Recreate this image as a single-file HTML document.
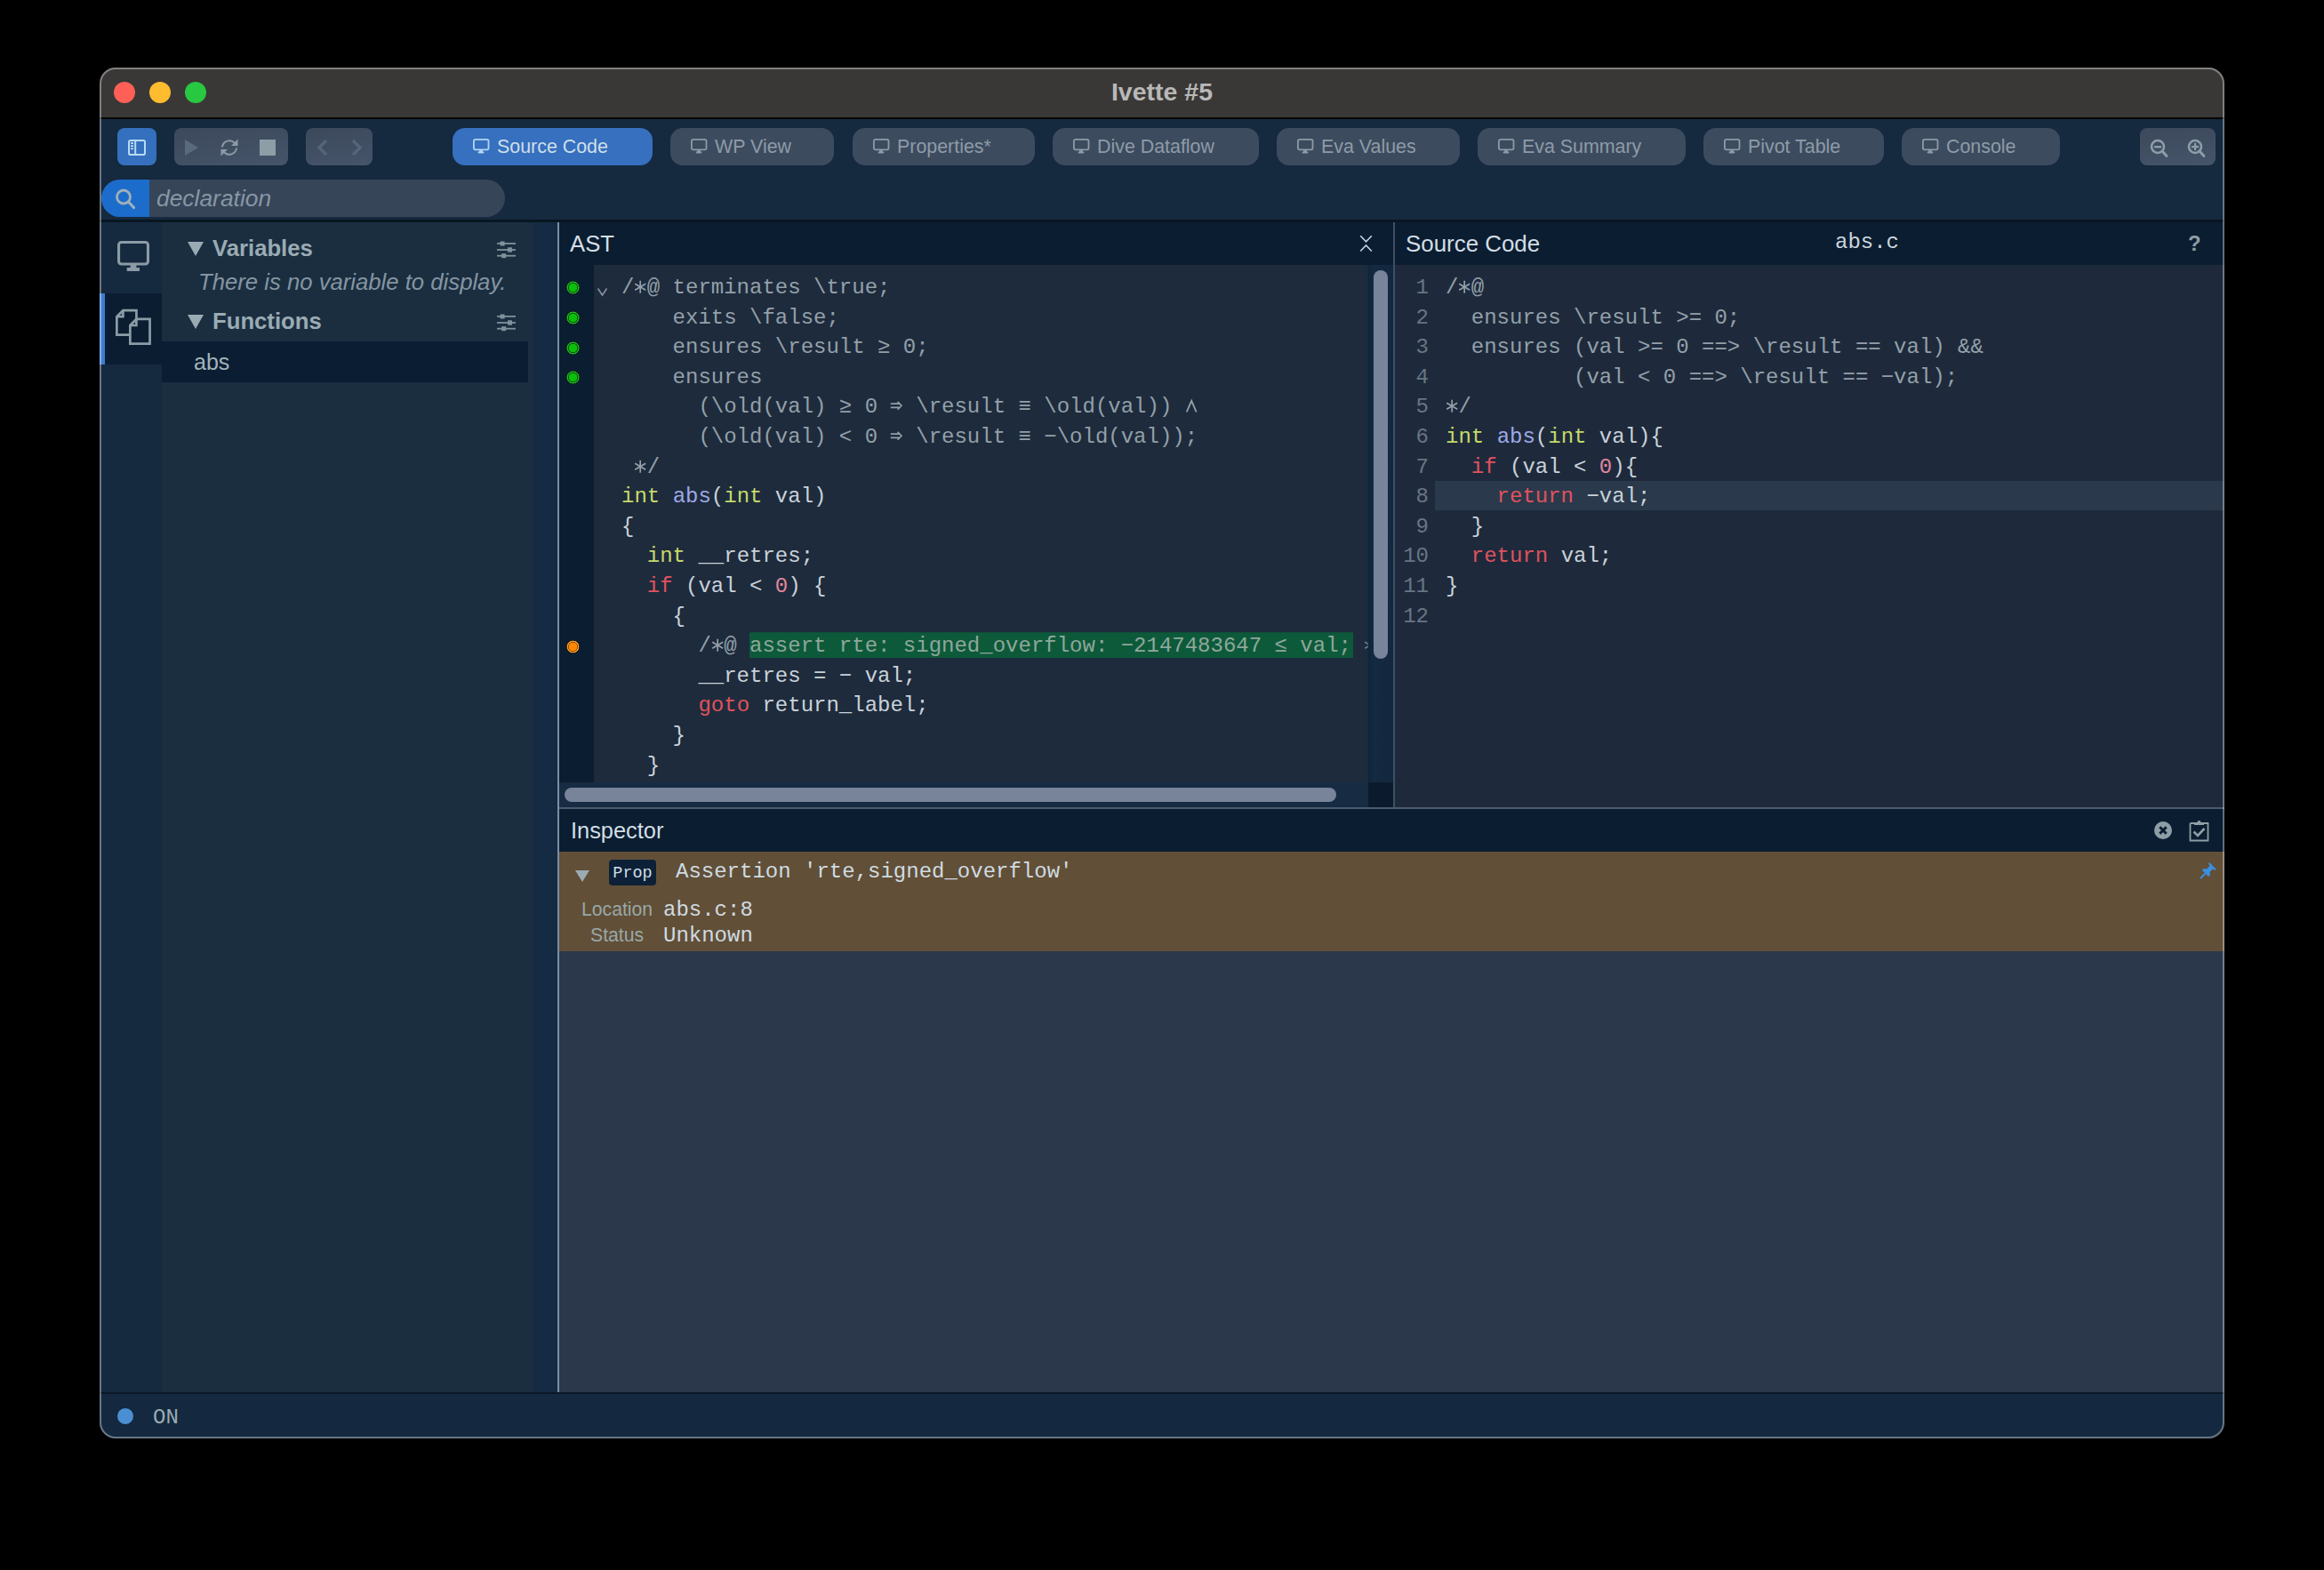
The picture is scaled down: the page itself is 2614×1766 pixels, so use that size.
<!DOCTYPE html>
<html><head><meta charset="utf-8">
<style>
*{margin:0;padding:0;box-sizing:border-box}
html,body{width:2614px;height:1766px;background:#000;overflow:hidden}
body{position:relative;font-family:"Liberation Sans",sans-serif}
.a{position:absolute}
#win{position:absolute;left:112px;top:76px;width:2390px;height:1542px;border-radius:18px;overflow:hidden;background:#152a41}
#in{position:absolute;left:-112px;top:-76px;width:2614px;height:1766px}
#frame{position:absolute;left:112px;top:76px;width:2390px;height:1542px;border-radius:18px;border:2px solid rgba(255,255,255,0.36);pointer-events:none;z-index:50}
.mono{font-family:"Liberation Mono",monospace}
.tab{position:absolute;top:144px;height:42px;border-radius:14px;background:#3d4b5f;color:#8d9ba7;font-size:21.4px;line-height:42px;white-space:nowrap}
.tab.on{background:#3670bf;color:#cfdfe9}
.tab.on svg{color:#b4d6f2}
.tab svg{position:absolute;left:23px;top:12px}
.tab span{position:absolute;left:50px;top:0}
.grp{position:absolute;top:144px;height:42px;border-radius:8px;background:linear-gradient(170deg,#3c495b,#46546a)}
.code{position:absolute;font-family:"Liberation Mono",monospace;font-size:24px;line-height:33.6px;white-space:pre;color:#c9d2da}
.cm{color:#93a0aa}
.kw{color:#c6da6a}
.fn{color:#9ea8e6}
.rd{color:#e0525e}
.nm{color:#e3879e}
.ln{color:#687584}
.hl{background:#0d5a3b;color:#8ea79a;box-shadow:0 -1.5px 0 #0d5a3b, 2px -1.5px 0 #0d5a3b, 2px 0 0 #0d5a3b}
.g{display:inline-block;width:14.4px;height:20px;vertical-align:-2px}
.g svg{display:block}
.dot{width:15px;height:15px;border-radius:50%;background:radial-gradient(circle closest-side,#0bbf0b 0,#0bbf0b 62%,#0a5c0a 66%,#0a5c0a 74%,#28b028 79%,#28b028 90%,#06300a 96%)}
.dot.or{background:radial-gradient(circle closest-side,#ff8800 0,#ff8800 60%,#9a4c00 65%,#9a4c00 72%,#f3a13a 77%,#f3a13a 88%,#2a1800 95%)}
</style></head><body>
<div id="win"><div id="in">
  <!-- title bar -->
  <div class="a" style="left:112px;top:76px;width:2390px;height:56px;background:#3a3836"></div>
  <div class="a" style="left:112px;top:132px;width:2390px;height:1.6px;background:#050505"></div>
  <div class="a" style="left:128px;top:92px;width:24px;height:24px;border-radius:50%;background:#fe5f57"></div>
  <div class="a" style="left:168px;top:92px;width:24px;height:24px;border-radius:50%;background:#febc2e"></div>
  <div class="a" style="left:208px;top:92px;width:24px;height:24px;border-radius:50%;background:#28c840"></div>
  <div class="a" style="left:112px;top:75px;width:2390px;height:56px;line-height:56px;text-align:center;color:#b8b8b8;font-weight:bold;font-size:28.5px">Ivette #5</div>
  <!-- toolbar -->
  <div class="a" style="left:112px;top:134px;width:2390px;height:114px;background:#15293f"></div>
  <!-- sidebar toggle -->
  <div class="grp" style="left:132px;width:44px;background:#3570bf">
    <svg class="a" style="left:12px;top:13px" width="20" height="18" viewBox="0 0 20 18"><rect x="1" y="1" width="18" height="16" rx="1.8" fill="none" stroke="#b8daf0" stroke-width="2"/><rect x="7.2" y="1" width="2" height="16" fill="#b8daf0"/><rect x="3" y="3.2" width="3" height="1.7" fill="#c2e0f2"/><rect x="3" y="6.3" width="3" height="1.7" fill="#c2e0f2"/><rect x="3" y="9.4" width="3" height="1.7" fill="#c2e0f2"/></svg>
  </div>
  <div class="grp" style="left:196px;width:128px">
    <svg class="a" style="left:12px;top:13px" width="16" height="18" viewBox="0 0 16 18"><path d="M0 0 L15 9 L0 18 Z" fill="#5a6a7e"/></svg>
    <svg class="a" style="left:51px;top:11px" width="22" height="22" viewBox="0 0 22 22"><path d="M3 10.5 A8 8 0 0 1 17 6" fill="none" stroke="#8c9ca6" stroke-width="2"/><path d="M19 11.5 A8 8 0 0 1 5 16" fill="none" stroke="#8c9ca6" stroke-width="2"/><path d="M20.5 1.5 L20.5 9 L13 9 Z" fill="#8c9ca6"/><path d="M1.5 20.5 L1.5 13 L9 13 Z" fill="#8c9ca6"/></svg>
    <div class="a" style="left:96px;top:13px;width:17.5px;height:18px;background:#8d9ea7"></div>
  </div>
  <div class="grp" style="left:344px;width:75px">
    <svg class="a" style="left:12px;top:12px" width="14" height="20" viewBox="0 0 14 20"><path d="M11 2 L3 10 L11 18" fill="none" stroke="#56667a" stroke-width="3.2"/></svg>
    <svg class="a" style="left:50px;top:12px" width="14" height="20" viewBox="0 0 14 20"><path d="M3 2 L11 10 L3 18" fill="none" stroke="#56667a" stroke-width="3.2"/></svg>
  </div>
  <div class="tab on" style="left:509px;width:225px"><svg width="19" height="17" viewBox="0 0 19 17"><rect x="0.9" y="0.9" width="16.6" height="11.4" rx="1.8" fill="none" stroke="currentColor" stroke-width="1.8"/><path d="M7.4 12.5 L10.6 12.5 L11 15.2 L7 15.2 Z" fill="currentColor"/><rect x="5.6" y="14.6" width="6.8" height="1.8" rx="0.8" fill="currentColor"/></svg><span>Source Code</span></div>
  <div class="tab" style="left:754px;width:184px"><svg width="19" height="17" viewBox="0 0 19 17"><rect x="0.9" y="0.9" width="16.6" height="11.4" rx="1.8" fill="none" stroke="currentColor" stroke-width="1.8"/><path d="M7.4 12.5 L10.6 12.5 L11 15.2 L7 15.2 Z" fill="currentColor"/><rect x="5.6" y="14.6" width="6.8" height="1.8" rx="0.8" fill="currentColor"/></svg><span>WP View</span></div>
  <div class="tab" style="left:959px;width:205px"><svg width="19" height="17" viewBox="0 0 19 17"><rect x="0.9" y="0.9" width="16.6" height="11.4" rx="1.8" fill="none" stroke="currentColor" stroke-width="1.8"/><path d="M7.4 12.5 L10.6 12.5 L11 15.2 L7 15.2 Z" fill="currentColor"/><rect x="5.6" y="14.6" width="6.8" height="1.8" rx="0.8" fill="currentColor"/></svg><span>Properties*</span></div>
  <div class="tab" style="left:1184px;width:232px"><svg width="19" height="17" viewBox="0 0 19 17"><rect x="0.9" y="0.9" width="16.6" height="11.4" rx="1.8" fill="none" stroke="currentColor" stroke-width="1.8"/><path d="M7.4 12.5 L10.6 12.5 L11 15.2 L7 15.2 Z" fill="currentColor"/><rect x="5.6" y="14.6" width="6.8" height="1.8" rx="0.8" fill="currentColor"/></svg><span>Dive Dataflow</span></div>
  <div class="tab" style="left:1436px;width:206px"><svg width="19" height="17" viewBox="0 0 19 17"><rect x="0.9" y="0.9" width="16.6" height="11.4" rx="1.8" fill="none" stroke="currentColor" stroke-width="1.8"/><path d="M7.4 12.5 L10.6 12.5 L11 15.2 L7 15.2 Z" fill="currentColor"/><rect x="5.6" y="14.6" width="6.8" height="1.8" rx="0.8" fill="currentColor"/></svg><span>Eva Values</span></div>
  <div class="tab" style="left:1662px;width:234px"><svg width="19" height="17" viewBox="0 0 19 17"><rect x="0.9" y="0.9" width="16.6" height="11.4" rx="1.8" fill="none" stroke="currentColor" stroke-width="1.8"/><path d="M7.4 12.5 L10.6 12.5 L11 15.2 L7 15.2 Z" fill="currentColor"/><rect x="5.6" y="14.6" width="6.8" height="1.8" rx="0.8" fill="currentColor"/></svg><span>Eva Summary</span></div>
  <div class="tab" style="left:1916px;width:203px"><svg width="19" height="17" viewBox="0 0 19 17"><rect x="0.9" y="0.9" width="16.6" height="11.4" rx="1.8" fill="none" stroke="currentColor" stroke-width="1.8"/><path d="M7.4 12.5 L10.6 12.5 L11 15.2 L7 15.2 Z" fill="currentColor"/><rect x="5.6" y="14.6" width="6.8" height="1.8" rx="0.8" fill="currentColor"/></svg><span>Pivot Table</span></div>
  <div class="tab" style="left:2139px;width:178px"><svg width="19" height="17" viewBox="0 0 19 17"><rect x="0.9" y="0.9" width="16.6" height="11.4" rx="1.8" fill="none" stroke="currentColor" stroke-width="1.8"/><path d="M7.4 12.5 L10.6 12.5 L11 15.2 L7 15.2 Z" fill="currentColor"/><rect x="5.6" y="14.6" width="6.8" height="1.8" rx="0.8" fill="currentColor"/></svg><span>Console</span></div>
  <div class="grp" style="left:2407px;width:85px">
    <svg class="a" style="left:10px;top:10px" width="24" height="24" viewBox="0 0 24 24"><circle cx="10" cy="11" r="7" fill="none" stroke="#8d9ea9" stroke-width="2.6"/><path d="M15 16 L20 21.5" stroke="#8d9ea9" stroke-width="3" stroke-linecap="round"/><rect x="6" y="10" width="8" height="2.4" fill="#8d9ea9"/></svg>
    <svg class="a" style="left:52px;top:10px" width="24" height="24" viewBox="0 0 24 24"><circle cx="10" cy="11" r="7" fill="none" stroke="#8d9ea9" stroke-width="2.6"/><path d="M15 16 L20 21.5" stroke="#8d9ea9" stroke-width="3" stroke-linecap="round"/><rect x="6" y="10" width="8" height="2.2" fill="#8d9ea9"/><rect x="9" y="7" width="2.2" height="8" fill="#8d9ea9"/></svg>
  </div>
  <!-- search -->
  <div class="a" style="left:114px;top:202px;width:454px;height:42px;border-radius:21px;background:#374559;overflow:hidden">
    <div class="a" style="left:0;top:0;width:54px;height:42px;background:#1c6ccb"></div>
    <svg class="a" style="left:15px;top:10px" width="24" height="24" viewBox="0 0 24 24"><circle cx="10" cy="9.5" r="7.5" fill="none" stroke="#9fb1ba" stroke-width="2.8"/><path d="M15.5 15 L21.5 21.5" stroke="#9fb1ba" stroke-width="3.2" stroke-linecap="round"/></svg>
    <div class="a" style="left:62px;top:0;height:42px;line-height:42px;font-style:italic;font-size:26.4px;color:#8797a4">declaration</div>
  </div>
  <div class="a" style="left:112px;top:247px;width:2390px;height:3px;background:#081622"></div>
  <!-- activity bar -->
  <div class="a" style="left:112px;top:250px;width:70px;height:1316px;background:#15293f"></div>
  <div class="a" style="left:112px;top:330px;width:70px;height:80px;background:#0b1d31"></div>
  <div class="a" style="left:112px;top:330px;width:6px;height:80px;background:#3d7dd3"></div>
  <svg class="a" style="left:130px;top:269px" width="40" height="38" viewBox="0 0 40 38"><rect x="3.55" y="3.55" width="32.9" height="24.4" rx="3" fill="none" stroke="#8b9ca7" stroke-width="3.1"/><rect x="16.7" y="29" width="6.7" height="4" fill="#8b9ca7"/><rect x="12.7" y="32" width="14.3" height="4" rx="0.5" fill="#8b9ca7"/></svg>
  <svg class="a" style="left:128px;top:346px" width="44" height="44" viewBox="0 0 44 44"><g fill="none" stroke="#8b9ca7" stroke-width="2.7" stroke-linejoin="miter"><path d="M3.35 10.2 L10.4 3.15 L25.45 3.15 L25.45 30.65 L3.35 30.65 Z"/><path d="M3.35 10.2 L10.4 10.2 L10.4 3.15"/></g><path d="M18.35 20 L25.4 12.95 L40.55 12.95 L40.55 40.55 L18.35 40.55 Z" fill="#0b1d31" stroke="#8b9ca7" stroke-width="2.7"/><path d="M18.35 20 L25.4 20 L25.4 12.95" fill="none" stroke="#8b9ca7" stroke-width="2.7"/></svg>
  <!-- sidebar -->
  <div class="a" style="left:182px;top:250px;width:445px;height:1316px;background:#1a2e40"></div>
  <div class="a" style="left:600px;top:250px;width:27px;height:1316px;background:#152a43"></div>
  <div class="a" style="left:182px;top:384px;width:412px;height:46px;background:#0b1d32"></div>
  <svg class="a" style="left:211px;top:272px" width="18" height="16" viewBox="0 0 18 16"><path d="M0 0 L18 0 L9 16 Z" fill="#9aabb3"/></svg>
  <div class="a" style="left:239px;top:256px;height:46px;line-height:46px;font-weight:bold;font-size:25.7px;color:#9aabb3">Variables</div>
  <svg class="a sl" style="left:559px;top:271px" width="22" height="20" viewBox="0 0 22 20"><g fill="#7f929b"><rect x="0" y="2" width="21" height="1.8"/><rect x="0" y="9.1" width="21" height="1.8"/><rect x="0" y="15.8" width="21" height="1.8"/><rect x="3.6" y="0.5" width="5" height="5"/><rect x="12" y="7.3" width="5" height="5.3"/><rect x="5.2" y="14.2" width="5" height="5"/></g></svg>
  <div class="a" style="left:223px;top:294px;height:46px;line-height:46px;font-style:italic;font-size:25.7px;color:#8595a2">There is no variable to display.</div>
  <svg class="a" style="left:211px;top:354px" width="18" height="16" viewBox="0 0 18 16"><path d="M0 0 L18 0 L9 16 Z" fill="#9aabb3"/></svg>
  <div class="a" style="left:239px;top:338px;height:46px;line-height:46px;font-weight:bold;font-size:25.7px;color:#9aabb3">Functions</div>
  <svg class="a sl" style="left:559px;top:353px" width="22" height="20" viewBox="0 0 22 20"><g fill="#7f929b"><rect x="0" y="2" width="21" height="1.8"/><rect x="0" y="9.1" width="21" height="1.8"/><rect x="0" y="15.8" width="21" height="1.8"/><rect x="3.6" y="0.5" width="5" height="5"/><rect x="12" y="7.3" width="5" height="5.3"/><rect x="5.2" y="14.2" width="5" height="5"/></g></svg>
  <div class="a" style="left:218px;top:384px;height:46px;line-height:46px;font-size:25px;color:#a3b3bb">abs</div>
  <div class="a" style="left:627px;top:250px;width:2px;height:1316px;background:#7b8ea2"></div>
  <!-- AST panel -->
  <div class="a" style="left:629px;top:250px;width:939px;height:658px;background:#0b1d30"></div>
  <div class="a" style="left:641px;top:250px;height:48px;line-height:48px;font-size:25.7px;color:#d2dee6">AST</div>
  <svg class="a" style="left:1529px;top:264px" width="16" height="20" viewBox="0 0 16 20"><path d="M1.2 1.3 L7.5 7.8 L13.8 1.3 M1.2 18.5 L7.5 12 L13.8 18.5" fill="none" stroke="#c0d5e4" stroke-width="1.6"/></svg>
  <div class="a" style="left:668px;top:298px;width:871px;height:582px;background:#1e2b3c"></div>
  
  <div class="a" style="left:668px;top:298px;width:871px;height:582px;overflow:hidden">
    <div class="code" style="left:31px;top:9px"><span class="cm">/<span class="g"><svg width="14.4" height="20" viewBox="0 0 14.4 20"><path d="M7.2 3.8 L7.2 17.8 M1.2 7.3 L13.2 14.3 M1.2 14.3 L13.2 7.3" fill="none" stroke="currentColor" stroke-width="1.7"/></svg></span>@ terminates \true;</span>
<span class="cm">    exits \false;</span>
<span class="cm">    ensures \result ≥ 0;</span>
<span class="cm">    ensures</span>
<span class="cm">      (\old(val) ≥ 0 <span class="g"><svg width="14.4" height="20" viewBox="0 0 14.4 20"><path d="M0.8 8.1 L11.6 8.1 M0.8 12.4 L11.6 12.4 M8.6 5.8 L13 10.25 L8.6 14.7" fill="none" stroke="currentColor" stroke-width="1.6"/></svg></span> \result ≡ \old(val)) <span class="g"><svg width="14.4" height="20" viewBox="0 0 14.4 20"><path d="M1.8 17.4 L7.2 4.8 L12.6 17.4" fill="none" stroke="currentColor" stroke-width="1.8"/></svg></span></span>
<span class="cm">      (\old(val) &lt; 0 <span class="g"><svg width="14.4" height="20" viewBox="0 0 14.4 20"><path d="M0.8 8.1 L11.6 8.1 M0.8 12.4 L11.6 12.4 M8.6 5.8 L13 10.25 L8.6 14.7" fill="none" stroke="currentColor" stroke-width="1.6"/></svg></span> \result ≡ −\old(val));</span>
<span class="cm"> <span class="g"><svg width="14.4" height="20" viewBox="0 0 14.4 20"><path d="M7.2 3.8 L7.2 17.8 M1.2 7.3 L13.2 14.3 M1.2 14.3 L13.2 7.3" fill="none" stroke="currentColor" stroke-width="1.7"/></svg></span>/</span>
<span class="kw">int</span> <span class="fn">abs</span>(<span class="kw">int</span> val)
{
  <span class="kw">int</span> __retres;
  <span class="rd">if</span> (val &lt; <span class="nm">0</span>) {
    {
      <span class="cm">/<span class="g"><svg width="14.4" height="20" viewBox="0 0 14.4 20"><path d="M7.2 3.8 L7.2 17.8 M1.2 7.3 L13.2 14.3 M1.2 14.3 L13.2 7.3" fill="none" stroke="currentColor" stroke-width="1.7"/></svg></span>@ </span><span class="hl">assert rte: signed_overflow: −2147483647 ≤ val;</span><span class="cm"> <span class="g"><svg width="14.4" height="20" viewBox="0 0 14.4 20"><path d="M7.2 3.8 L7.2 17.8 M1.2 7.3 L13.2 14.3 M1.2 14.3 L13.2 7.3" fill="none" stroke="currentColor" stroke-width="1.7"/></svg></span>/</span>
      __retres = − val;
      <span class="rd">goto</span> return_label;
    }
  }</div>
  </div>
  <svg class="a" style="left:671px;top:323px" width="13" height="11" viewBox="0 0 13 11"><path d="M1.5 1.5 L6.5 9 L11.5 1.5" fill="none" stroke="#8793a0" stroke-width="1.6"/></svg>
  <div class="a dot" style="left:637px;top:316.3px"></div><div class="a dot" style="left:637px;top:349.9px"></div><div class="a dot" style="left:637px;top:383.5px"></div><div class="a dot" style="left:637px;top:417.1px"></div><div class="a dot or" style="left:637px;top:719.5px"></div>
  
<div class="a" style="left:1533px;top:298px;width:34px;height:582px;background:linear-gradient(to right,rgba(21,42,66,0) 0,#142a41 12px,#13273e 100%)"></div>
  <div class="a" style="left:1545px;top:304px;width:16px;height:437px;border-radius:8px;background:#78849a"></div>
  <div class="a" style="left:629px;top:880px;width:910px;height:28px;background:#172b42"></div>
  <div class="a" style="left:635px;top:886px;width:868px;height:16px;border-radius:8px;background:#78849a"></div>
  <div class="a" style="left:1539px;top:880px;width:28px;height:28px;background:#0b1b2d"></div>
  <div class="a" style="left:1567px;top:250px;width:2px;height:658px;background:#3f5064"></div>
  <!-- Source panel -->
  <div class="a" style="left:1569px;top:250px;width:933px;height:48px;background:#0b1d30"></div>
  <div class="a" style="left:1581px;top:250px;height:48px;line-height:48px;font-size:25.9px;color:#d2dee6">Source Code</div>
  <div class="a mono" style="left:2064px;top:250px;height:46px;line-height:46px;font-size:24px;color:#cbd6de">abs.c</div>
  <div class="a" style="left:2461px;top:250px;height:48px;line-height:48px;font-size:24px;font-weight:bold;color:#8d9ca5">?</div>
  <div class="a" style="left:1569px;top:298px;width:933px;height:610px;background:#1e2a3b"></div>
  <div class="a" style="left:1614px;top:541px;width:888px;height:33px;background:#2a394b"></div>
  <div class="code ln" style="left:1568px;top:307px;width:39px;text-align:right">1
2
3
4
5
6
7
8
9
10
11
12</div>
  <div class="code" style="left:1626px;top:307px"><span class="cm">/<span class="g"><svg width="14.4" height="20" viewBox="0 0 14.4 20"><path d="M7.2 3.8 L7.2 17.8 M1.2 7.3 L13.2 14.3 M1.2 14.3 L13.2 7.3" fill="none" stroke="currentColor" stroke-width="1.7"/></svg></span>@</span>
<span class="cm">  ensures \result &gt;= 0;</span>
<span class="cm">  ensures (val &gt;= 0 ==&gt; \result == val) &amp;&amp;</span>
<span class="cm">          (val &lt; 0 ==&gt; \result == −val);</span>
<span class="cm"><span class="g"><svg width="14.4" height="20" viewBox="0 0 14.4 20"><path d="M7.2 3.8 L7.2 17.8 M1.2 7.3 L13.2 14.3 M1.2 14.3 L13.2 7.3" fill="none" stroke="currentColor" stroke-width="1.7"/></svg></span>/</span>
<span class="kw">int</span> <span class="fn">abs</span>(<span class="kw">int</span> val){
  <span class="rd">if</span> (val &lt; <span class="nm">0</span>){
    <span class="rd">return</span> −val;
  }
  <span class="rd">return</span> val;
}
</div>
  <div class="a" style="left:629px;top:908px;width:1873px;height:2px;background:#4a5b6e"></div>
  <!-- Inspector -->
  <div class="a" style="left:629px;top:910px;width:1873px;height:48px;background:#0b1d30"></div>
  <div class="a" style="left:642px;top:910px;height:48px;line-height:48px;font-size:25.4px;color:#d2dee6">Inspector</div>
  <div class="a" style="left:629px;top:958px;width:1873px;height:112px;background:#614f37"></div>
  <div class="a" style="left:629px;top:1070px;width:1873px;height:496px;background:#2b384c"></div>
  <svg class="a" style="left:2423px;top:924px" width="20" height="20" viewBox="0 0 20 20"><circle cx="10" cy="10" r="10" fill="#8e9ea6"/><path d="M6.3 6.3 L13.7 13.7 M13.7 6.3 L6.3 13.7" stroke="#0b1d30" stroke-width="3"/></svg>
  <svg class="a" style="left:2462px;top:921px" width="23" height="26" viewBox="0 0 23 26"><path d="M1.5 5 L1.5 24.5 L21.5 24.5 L21.5 5 L17 5 M6 5 L1.5 5" fill="none" stroke="#8e9ea6" stroke-width="1.8"/><path d="M6 7 L17 7 L17 4 L13.5 4 A2 2 0 0 0 9.5 4 L6 4 Z" fill="#8e9ea6"/><path d="M5.5 14.5 L10 19 L17.5 11" fill="none" stroke="#8e9ea6" stroke-width="2.6"/></svg>
  <svg class="a" style="left:2474px;top:967px" width="22" height="22" viewBox="0 0 22 22"><path d="M11 3 L19 11 L17.5 12 L15 10.5 L11.5 14 L12 17.5 L10 19 L3 12 L4.5 10 L8 10.5 L11.5 7 L10 4.5 Z" fill="#3b8fe0"/><path d="M6.5 15.5 L1 21" stroke="#3b8fe0" stroke-width="2"/></svg>
  <svg class="a" style="left:647px;top:979px" width="16" height="13" viewBox="0 0 16 13"><path d="M0 0 L16 0 L8 13 Z" fill="#9aabb3"/></svg>
  <div class="a mono" style="left:685px;top:967px;width:53px;height:29px;border-radius:4px;background:#0c2137;color:#d2dee6;font-size:18.5px;line-height:31px;text-align:center">Prop</div>
  <div class="a mono" style="left:760px;top:964px;height:34px;line-height:34px;font-size:24px;color:#cfdbe2">Assertion 'rte,signed_overflow'</div>
  <div class="a" style="left:654px;top:1007px;height:32px;line-height:32px;font-size:21.2px;color:#98a8a8">Location</div>
  <div class="a mono" style="left:746px;top:1007px;height:34px;line-height:34px;font-size:24px;color:#cfdbe2">abs.c:8</div>
  <div class="a" style="left:664px;top:1036px;height:32px;line-height:32px;font-size:21.2px;color:#98a8a8">Status</div>
  <div class="a mono" style="left:746px;top:1036px;height:34px;line-height:34px;font-size:24px;color:#cfdbe2">Unknown</div>

  <!-- status bar -->
  <div class="a" style="left:112px;top:1566px;width:2390px;height:2px;background:#0b1827"></div>
  <div class="a" style="left:112px;top:1568px;width:2390px;height:50px;background:#14293f"></div>
  <div class="a" style="left:131px;top:1583px;width:20px;height:20px;border-radius:50%;background:#4b8fd2;border:1.5px solid #0f2236"></div>
  <div class="a mono" style="left:172px;top:1570px;height:49px;line-height:49px;font-size:24px;color:#9aacb2">ON</div>


</div></div>
<div id="frame"></div>
</body></html>
